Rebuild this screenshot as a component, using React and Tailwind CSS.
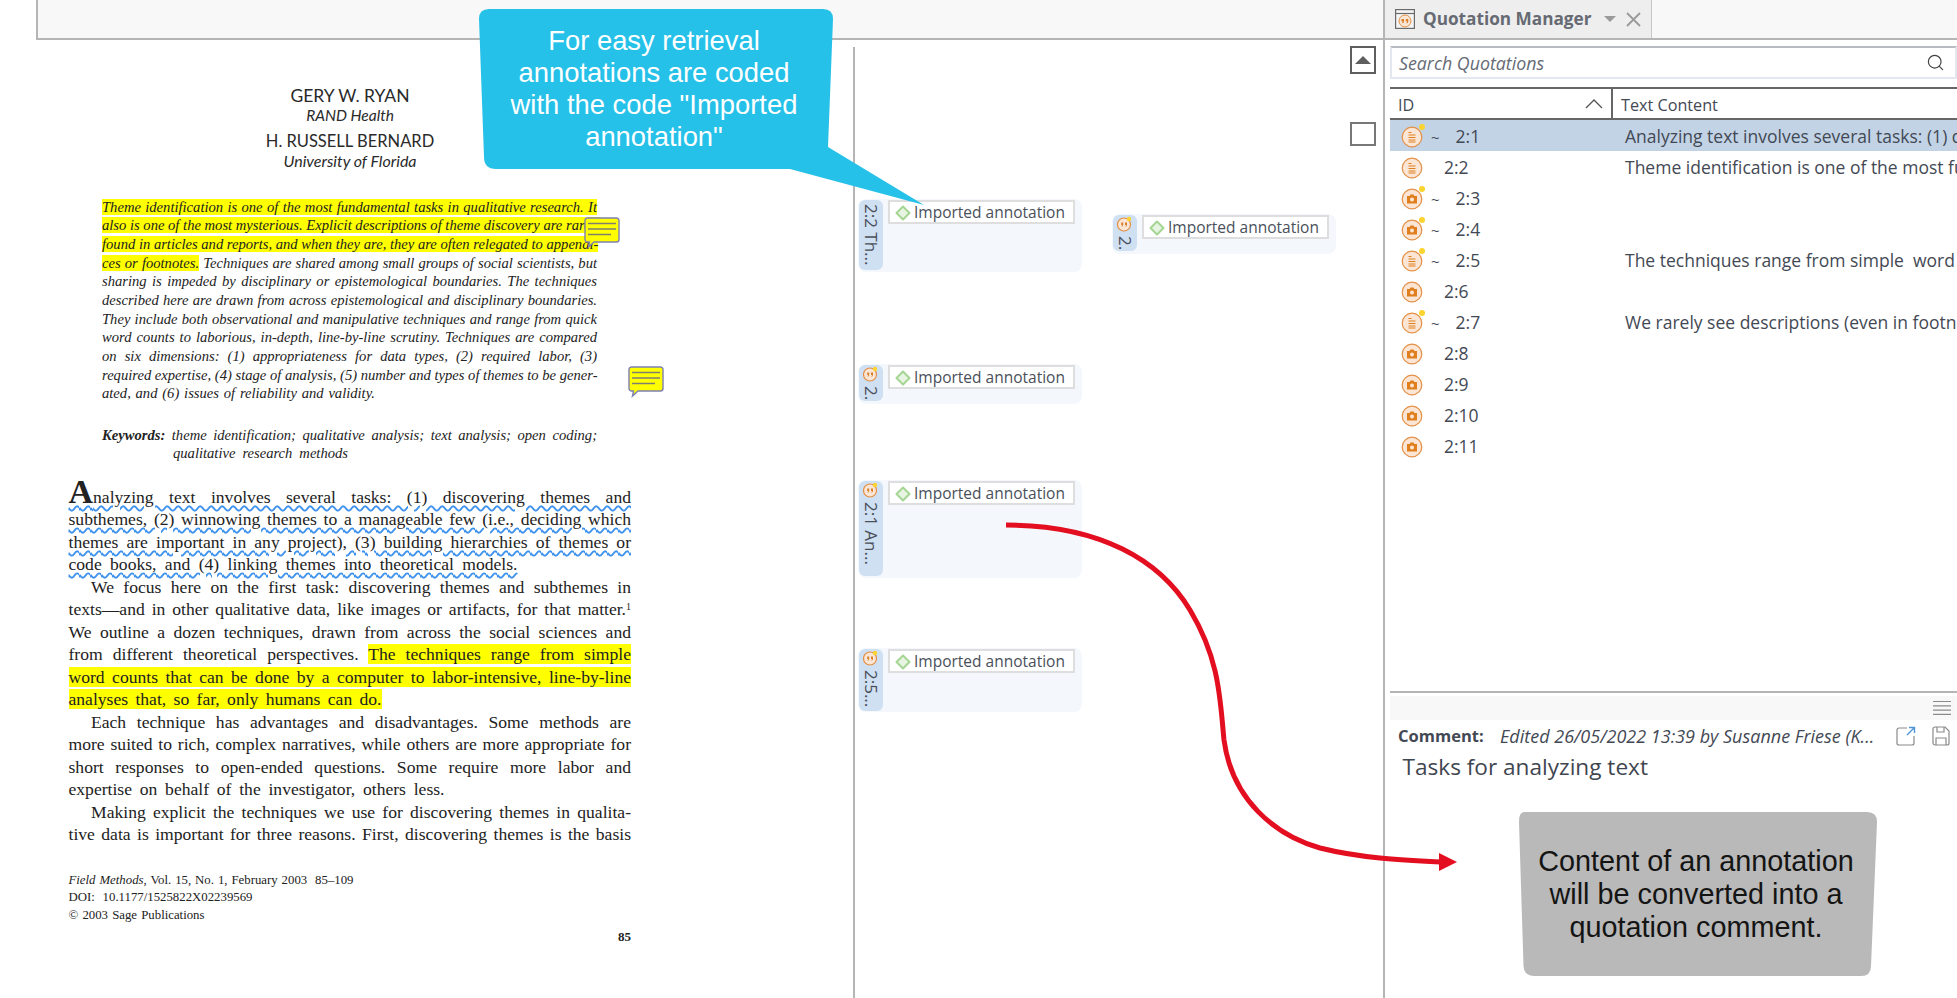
import React from "react";
import { Search } from "lucide-react";

const Diamond = () => (
  <svg width="16" height="16" viewBox="0 0 16 16" className="shrink-0">
    <path d="M8 1.5 L14.5 8 L8 14.5 L1.5 8 Z" fill="#e8f4e2" stroke="#a5d592" strokeWidth="2" strokeLinejoin="round" />
  </svg>
);

const Chip = () => (
  <div className="flex h-[24px] w-[187px] items-center gap-[3px] border-2 border-[#dedede] bg-white pl-[5px] pt-[1px] text-[15.5px] text-[#4a4f5a]">
    <Diamond />
    <span className="whitespace-nowrap">Imported annotation</span>
  </div>
);

const QuoteIcon = () => (
  <svg width="18" height="16" viewBox="0 0 18 16" className="shrink-0">
    <circle cx="7" cy="8.5" r="6.5" fill="#fbe6d5" stroke="#e38f45" strokeWidth="1.2" />
    <path d="M4.2 6.5h2v2.2q0 1.6-1.4 2l-.3-.7q.8-.4.8-1.1h-1.1z M8 6.5h2v2.2q0 1.6-1.4 2l-.3-.7q.8-.4.8-1.1H8z" fill="#d97f2a" />
    <circle cx="12" cy="3" r="2.2" fill="#fdd32f" />
  </svg>
);

const Card = ({ tab, icon, tabH, cardH, mt }) => (
  <div className={`flex w-[224px] gap-[5px] rounded-[8px] bg-[#f4f8fc] p-[1px] ${cardH} ${mt}`}>
    <div className={`flex w-[24px] shrink-0 flex-col items-center overflow-hidden rounded-[6px] bg-[#cfe0f3] ${tabH}`}>
      {icon && <div className="mt-[1px] ml-[2px] h-[16px]"><QuoteIcon /></div>}
      <span className="mt-[4px] whitespace-nowrap text-[17px] leading-[24px] text-[#4a4f5a] [writing-mode:vertical-rl]">{tab}</span>
    </div>
    <Chip />
  </div>
);

const DocIcon = () => (
  <svg width="28" height="26" viewBox="0 0 28 26" className="shrink-0">
    <circle cx="11" cy="14" r="9.8" fill="#fbe6d5" stroke="#e38f45" strokeWidth="1.2" />
    <path d="M7.500 9.500h3M7.500 12h7M7.500 14.500h7M7.500 17h7M7.500 19h7" stroke="#e07f1e" strokeWidth="1.1" />
  </svg>
);
const CamIcon = () => (
  <svg width="28" height="26" viewBox="0 0 28 26" className="shrink-0">
    <circle cx="11" cy="14" r="9.8" fill="#fbe6d5" stroke="#e38f45" strokeWidth="1.2" />
    <path d="M6 11h2.5l1-1.6h3l1 1.6H16v7.500H6z" fill="#e07f1e" />
    <circle cx="11" cy="14.600" r="2" fill="#fbe6d5" />
  </svg>
);

const Row = ({ id, type, star, text, selected }) => (
  <div className={`flex h-[31px] items-center whitespace-nowrap text-[17.5px] text-[#434954] ${selected ? "bg-[#c2d3e6]" : ""}`}>
    <div className="relative ml-[11px] h-[26px] w-[28px] shrink-0">
      {type === "doc" ? <DocIcon /> : <CamIcon />}
      {star && <span className="absolute left-[18px] top-[1px] h-[6px] w-[6px] rounded-full bg-[#fdd32f]" />}
    </div>
    <div className={`w-[196px] shrink-0 pt-[1px] ${star ? "" : "pl-[15px]"}`}>
      {star && <span className="mr-[16px] ml-[2px] text-[15px]">~</span>}
      {id}
    </div>
    <span className="pt-[1px]">{text}</span>
  </div>
);

const AL = "whitespace-nowrap text-justify [text-align-last:justify]";
const A = `h-[18.7px] leading-[18.7px] w-[495px] ${AL}`;
const M = `h-[22.5px] leading-[22.5px] ${AL}`;
const Y = "bg-[#ffff00]";
const W = "underline decoration-wavy decoration-[#3f93ec] decoration-[2px] underline-offset-[2px]";

const NoteShape = ({ className }) => (
  <svg width="36" height="32" viewBox="0 0 36 32" className={className}>
    <path d="M3.5 1h29a2.5 2.5 0 0 1 2.5 2.5v19a2.5 2.5 0 0 1-2.5 2.5H10l-5.5 5 1-5h-2A2.5 2.5 0 0 1 1 22.500v-19A2.500 2.500 0 0 1 3.500 1z" fill="#ffff00" stroke="#7d80b0" strokeWidth="1.4" />
    <path d="M4 6.500h28M4 12h28M4 17.500h23" stroke="#7f7f70" strokeWidth="1.4" />
  </svg>
);

const PdfPage = () => (
  <div className="w-[853px] shrink-0 pl-[68.5px] font-['Liberation_Serif',serif] text-[#222]">
    <div className="ml-[163px] mt-[46px] w-[237px] text-center font-['Lato',sans-serif] text-[#2a2a2a]">
      <div className="h-[20px] text-[17.5px] leading-[20px]">GERY W. RYAN</div>
      <div className="h-[19px] text-[15.5px] italic leading-[19px]">RAND Health</div>
      <div className="mt-[6px] h-[20px] text-[16.5px] leading-[20px]">H. RUSSELL BERNARD</div>
      <div className="h-[19px] text-[16px] italic leading-[19px]">University of Florida</div>
    </div>

    <div className="ml-[33.5px] mt-[27.5px] text-[14.6px] italic">
      <div className={A}><span className={Y}>Theme identification is one of the most fundamental tasks in qualitative research. It</span></div>
      <div className={A}><span className={Y}>also is one of the most mysterious. Explicit descriptions of theme discovery are rarely</span></div>
      <div className={A}><span className={Y}>found in articles and reports, and when they are, they are often relegated to appendi-</span></div>
      <div className={A}><span className={Y}>ces or footnotes.</span> Techniques are shared among small groups of social scientists, but</div>
      <div className={A}>sharing is impeded by disciplinary or epistemological boundaries. The techniques</div>
      <div className={A}>described here are drawn from across epistemological and disciplinary boundaries.</div>
      <div className={A}>They include both observational and manipulative techniques and range from quick</div>
      <div className={A}>word counts to laborious, in-depth, line-by-line scrutiny. Techniques are compared</div>
      <div className={A}>on six dimensions: (1) appropriateness for data types, (2) required labor, (3)</div>
      <div className={A}>required expertise, (4) stage of analysis, (5) number and types of themes to be gener-</div>
      <div className={`h-[18.7px] w-[273px] leading-[18.7px] ${AL}`}>ated, and (6) issues of reliability and validity.</div>
      <div className={`mt-[23.4px] h-[18px] w-[495px] leading-[18px] ${AL}`}><b>Keywords:</b> theme identification; qualitative analysis; text analysis; open coding;</div>
      <div className={`ml-[71px] h-[18px] w-[175px] leading-[18px] ${AL}`}>qualitative research methods</div>
    </div>

    <div className="mt-[23.4px] text-[17.6px]">
      <div className={`${M} w-[562.500px] ${W}`}><span className="text-[34px] font-bold leading-[0]">A</span>nalyzing text involves several tasks: (1) discovering themes and</div>
      <div className={`${M} w-[562.500px] ${W}`}>subthemes, (2) winnowing themes to a manageable few (i.e., deciding which</div>
      <div className={`${M} w-[562.500px] ${W}`}>themes are important in any project), (3) building hierarchies of themes or</div>
      <div className={`${M} w-[449px] ${W}`}>code books, and (4) linking themes into theoretical models.</div>
      <div className={`${M} ml-[22.5px] w-[540px]`}>We focus here on the first task: discovering themes and subthemes in</div>
      <div className={`${M} w-[562.500px]`}>texts—and in other qualitative data, like images or artifacts, for that matter.<sup className="text-[10px]">1</sup></div>
      <div className={`${M} w-[562.500px]`}>We outline a dozen techniques, drawn from across the social sciences and</div>
      <div className={`${M} w-[562.500px]`}>from different theoretical perspectives. <span className={Y}>The techniques range from simple</span></div>
      <div className={`${M} w-[562.500px]`}><span className={Y}>word counts that can be done by a computer to labor-intensive, line-by-line</span></div>
      <div className={`${M} w-[313px]`}><span className={Y}>analyses that, so far, only humans can do.</span></div>
      <div className={`${M} ml-[22.5px] w-[540px]`}>Each technique has advantages and disadvantages. Some methods are</div>
      <div className={`${M} w-[562.500px]`}>more suited to rich, complex narratives, while others are more appropriate for</div>
      <div className={`${M} w-[562.500px]`}>short responses to open-ended questions. Some require more labor and</div>
      <div className={`${M} w-[376px]`}>expertise on behalf of the investigator, others less.</div>
      <div className={`${M} ml-[22.5px] w-[540px]`}>Making explicit the techniques we use for discovering themes in qualita-</div>
      <div className={`${M} w-[562.500px]`}>tive data is important for three reasons. First, discovering themes is the basis</div>
    </div>

    <div className="mt-[26px] text-[12.8px] leading-[17.5px]">
      <div className={`h-[17.5px] w-[285px] ${AL}`}><i>Field Methods</i>, Vol. 15, No. 1, February 2003&nbsp; 85–109</div>
      <div className={`h-[17.5px] w-[184px] ${AL}`}>DOI: 10.1177/1525822X02239569</div>
      <div className={`h-[17.5px] w-[136px] ${AL}`}>© 2003 Sage Publications</div>
    </div>
    <div className="mt-[3.5px] w-[562.500px] text-right text-[13px] font-bold leading-[18px]">85</div>
  </div>
);

const MarginPanel = () => (
  <div className="relative mt-[7px] flex flex-1 border-l-2 border-[#b5b5b5] pl-[3px] font-['Open_Sans',sans-serif]">
    <div className="flex w-[254px] shrink-0 flex-col">
      <Card tab="2:2 Th..." tabH="h-[70px]" cardH="h-[73px]" mt="mt-[152px]" />
      <Card tab="2." icon tabH="h-[36px]" cardH="h-[40px]" mt="mt-[92px]" />
      <Card tab="2:1 An..." icon tabH="h-[95px]" cardH="h-[98px]" mt="mt-[76px]" />
      <Card tab="2:5..." icon tabH="h-[62px]" cardH="h-[64px]" mt="mt-[70px]" />
    </div>
    <div className="shrink-0">
      <Card tab="2." icon tabH="h-[36px]" cardH="h-[40px]" mt="mt-[167px]" />
    </div>
    <div className="ml-[14px] shrink-0">
      <div className="mt-[-1px] flex h-[28px] w-[26px] items-center justify-center border-2 border-[#5f5f5f] bg-white">
        <span className="h-0 w-0 border-x-[8px] border-b-[8px] border-x-transparent border-b-[#5f5f5f]" />
      </div>
      <div className="mt-[48px] h-[24px] w-[26px] border-2 border-[#777]" />
    </div>
  </div>
);

const rows = [
  { id: "2:1", type: "doc", star: true, selected: true, text: "Analyzing text involves several tasks: (1) discovering themes" },
  { id: "2:2", type: "doc", text: "Theme identification is one of the most fundamental tasks" },
  { id: "2:3", type: "cam", star: true },
  { id: "2:4", type: "cam", star: true },
  { id: "2:5", type: "doc", star: true, text: "The techniques range from simple\u00a0 word counts that can" },
  { id: "2:6", type: "cam" },
  { id: "2:7", type: "doc", star: true, text: "We rarely see descriptions (even in footnotes) of how" },
  { id: "2:8", type: "cam" },
  { id: "2:9", type: "cam" },
  { id: "2:10", type: "cam" },
  { id: "2:11", type: "cam" },
];

const QuotationPanel = () => (
  <aside className="flex w-[574px] shrink-0 flex-col overflow-hidden border-l-2 border-[#b5b5b5] font-['Open_Sans',sans-serif]">
    <div className="flex h-[40px] shrink-0 border-b-2 border-[#b5b5b5] bg-[#f8f8f8]">
      <div className="flex w-[267px] items-center border-r border-[#c8c8c8] bg-[#eeeeee] pl-[10px]">
        <svg width="20" height="20" viewBox="0 0 20 20" className="shrink-0">
          <rect x="0.6" y="0.6" width="18.8" height="18.8" fill="#f5f5f5" stroke="#6a6a6a" strokeWidth="1.2" />
          <path d="M1 4.500h18" stroke="#6a6a6a" strokeWidth="1.2" />
          <circle cx="10" cy="12" r="6" fill="#fbe6d5" stroke="#e38f45" />
          <path d="M6.500 10h2.500v2.400q0 1.600-1.500 2l-.3-.7q.7-.3.7-1.100h-1.400zM10.800 10h2.500v2.400q0 1.600-1.500 2l-.3-.7q.7-.3.7-1.100h-1.400z" fill="#d97f2a" />
        </svg>
        <span className="ml-[8px] whitespace-nowrap text-[17.2px] font-bold text-[#666a73]">Quotation Manager</span>
        <span className="ml-[12px] h-0 w-0 border-x-[6px] border-t-[6px] border-x-transparent border-t-[#9a9a9a]" />
        <svg width="15" height="15" viewBox="0 0 15 15" className="ml-[10px]">
          <path d="M1 1l13 13M14 1L1 14" stroke="#9a9a9a" strokeWidth="1.8" />
        </svg>
      </div>
    </div>
    <div className="ml-[5px] mt-[6px] flex h-[33px] shrink-0 items-center border-2 border-[#e3e8f0] border-t-[#b8bcc2] pl-[7px] pr-[10px]">
      <span className="flex-1 pt-[2px] text-[17.8px] italic text-[#666b75]">Search Quotations</span>
      <Search size={19} strokeWidth={1.5} className="text-[#444]" />
    </div>
    <div className="ml-[5px] mt-[8px] flex h-[33px] shrink-0 border-y-2 border-[#666] text-[16.2px] text-[#434954]">
      <div className="flex w-[223px] items-center justify-between border-r-2 border-[#666] pl-[8px] pr-[8px]">
        <span className="pt-[3px]">ID</span>
        <svg width="18" height="10" viewBox="0 0 18 10"><path d="M1 9l8-8 8 8" fill="none" stroke="#555" strokeWidth="1.3" /></svg>
      </div>
      <div className="flex items-center pl-[8px] pt-[3px]">Text Content</div>
    </div>
    <div className="ml-[5px] h-[341px] shrink-0">
      {rows.map((r) => <Row key={r.id} {...r} />)}
    </div>
    <div className="ml-[5px] mt-[230px] h-[2px] shrink-0 bg-[#b5b5b5]" />
    <div className="ml-[5px] mt-[3px] flex h-[24px] shrink-0 items-center justify-end bg-[#f8f8f8] pr-[6px]">
      <svg width="18" height="18" viewBox="0 0 18 18"><path d="M0 2.500h18M0 6.800h18M0 11.100h18M0 15.400h18" stroke="#8a8a8a" strokeWidth="1.2" /></svg>
    </div>
    <div className="ml-[13px] mt-[4px] flex h-[24px] shrink-0 items-center whitespace-nowrap text-[16.5px] text-[#434954]">
      <span className="w-[102px] font-bold">Comment:</span>
      <span className="w-[396px] text-[18px] italic">Edited 26/05/2022 13:39 by Susanne Friese (K...</span>
      <svg width="20" height="20" viewBox="0 0 20 20" className="shrink-0">
        <path d="M11 2H3a2 2 0 0 0-2 2v13a2 2 0 0 0 2 2h13a2 2 0 0 0 2-2v-7" fill="none" stroke="#8a8a8a" strokeWidth="1.2" />
        <path d="M11 9l7-7M13 1.500h5.500V7" fill="none" stroke="#4f94d4" strokeWidth="1.4" />
      </svg>
      <svg width="18" height="20" viewBox="0 0 18 20" className="ml-[16px] shrink-0">
        <path d="M3 1h10l4 4v12a2 2 0 0 1-2 2H3a2 2 0 0 1-2-2V3a2 2 0 0 1 2-2z" fill="none" stroke="#8a8a8a" strokeWidth="1.2" />
        <path d="M5 1v5h7V1M4 19v-7h10v7" fill="none" stroke="#8a8a8a" strokeWidth="1.2" />
      </svg>
    </div>
    <div className="ml-[17.500px] mt-[7px] h-[24px] shrink-0 text-[22.6px] leading-[24px] text-[#3f4650]">Tasks for analyzing text</div>
  </aside>
);

export default function App() {
  return (
    <div className="relative flex h-[998px] w-[1957px] overflow-hidden bg-white">
      <main className="flex w-[1383px] shrink-0 flex-col">
        <div className="ml-[36px] h-[40px] shrink-0 border-b-2 border-l-2 border-[#b5b5b5] bg-[#f8f8f8]" />
        <div className="flex flex-1">
          <PdfPage />
          <MarginPanel />
        </div>
      </main>
      <QuotationPanel />

      {/* overlays */}
      <NoteShape className="absolute left-[584px] top-[217px]" />
      <NoteShape className="absolute left-[628px] top-[366px]" />

      <svg width="1957" height="998" viewBox="0 0 1957 998" className="pointer-events-none absolute left-0 top-0">
        <path d="M489 9 L823 9 Q833 9 833 19 L828 147 L924 205 L790 169 L496 169 Q484 169 484 157 L479 19 Q479 9 489 9 Z" fill="#26c1e8" />
        <path d="M1524 812 H1867 Q1877 812 1877 822 L1871 966 Q1871 976 1861 976 H1534 Q1524 976 1523.500 966 L1519 822 Q1519 812 1524 812 Z" fill="#b9b9b9" />
        <path d="M1006 525 C1100 525 1160 560 1190 610 C1220 660 1220 700 1224 740 C1232 800 1275 835 1320 848 C1360 858 1400 860 1440 862" fill="none" stroke="#e30f20" strokeWidth="5" />
        <path d="M1439 853 L1457 862 L1439 871 Z" fill="#e30f20" />
      </svg>

      <div className="absolute left-[477px] top-[25px] w-[354px] text-center font-['Liberation_Sans',sans-serif] text-[27.4px] leading-[32px] text-white">
        For easy retrieval<br />annotations are coded<br />with the code "Imported<br />annotation"
      </div>
      <div className="absolute left-[1517px] top-[845px] w-[358px] text-center font-['Liberation_Sans',sans-serif] text-[28.8px] leading-[33px] text-[#141414]">
        Content of an annotation<br />will be converted into a<br />quotation comment.
      </div>
    </div>
  );
}
